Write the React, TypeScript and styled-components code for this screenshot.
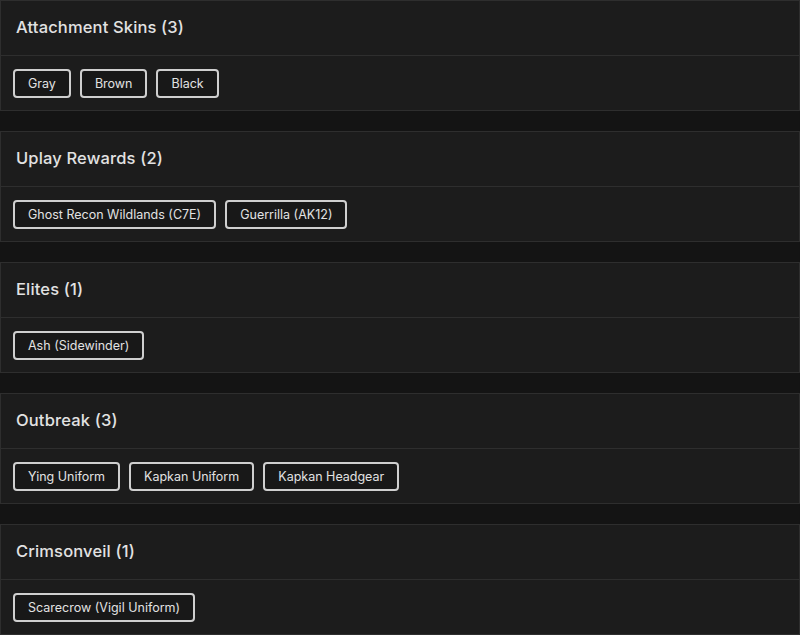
import React from "react";
import styled, { createGlobalStyle } from "styled-components";

const GlobalStyle = createGlobalStyle`
  html, body {
    margin: 0;
    padding: 0;
    background: #141414;
  }
  body {
    font-family: Inter, "Open Sans", "Liberation Sans", sans-serif;
    color: #e6e6e6;
  }
`;

const Page = styled.div`
  display: flex;
  flex-direction: column;
  gap: 20px;
`;

const Card = styled.section`
  background: #1c1c1c;
  border: 1px solid #2e2e2e;
`;

const CardHeader = styled.header`
  height: 55px;
  box-sizing: border-box;
  display: flex;
  align-items: center;
  padding: 0 15px 2px;
  border-bottom: 1px solid #2e2e2e;
`;

const Title = styled.h2`
  margin: 0;
  font-size: 16.5px;
  font-weight: 500;
  color: #e2e2e2;
  letter-spacing: 0.15px;
`;

const CardBody = styled.div`
  height: 54px;
  display: flex;
  align-items: center;
  gap: 9px;
  padding: 0 12px;
`;

const Tag = styled.button`
  height: 29px;
  padding: 0 13px;
  background: #181818;
  border: 2px solid #cfcfcf;
  border-radius: 4px;
  color: #e2e2e2;
  font-family: inherit;
  font-size: 12.5px;
  font-weight: 400;
  cursor: pointer;
`;

const groups: { name: string; items: string[] }[] = [
  { name: "Attachment Skins", items: ["Gray", "Brown", "Black"] },
  { name: "Uplay Rewards", items: ["Ghost Recon Wildlands (C7E)", "Guerrilla (AK12)"] },
  { name: "Elites", items: ["Ash (Sidewinder)"] },
  { name: "Outbreak", items: ["Ying Uniform", "Kapkan Uniform", "Kapkan Headgear"] },
  { name: "Crimsonveil", items: ["Scarecrow (Vigil Uniform)"] },
];

export default function App() {
  return (
    <>
      <GlobalStyle />
      <Page>
        {groups.map(g => (
          <Card key={g.name}>
            <CardHeader>
              <Title>{g.name} ({g.items.length})</Title>
            </CardHeader>
            <CardBody>
              {g.items.map(item => (
                <Tag key={item}>{item}</Tag>
              ))}
            </CardBody>
          </Card>
        ))}
      </Page>
    </>
  );
}
